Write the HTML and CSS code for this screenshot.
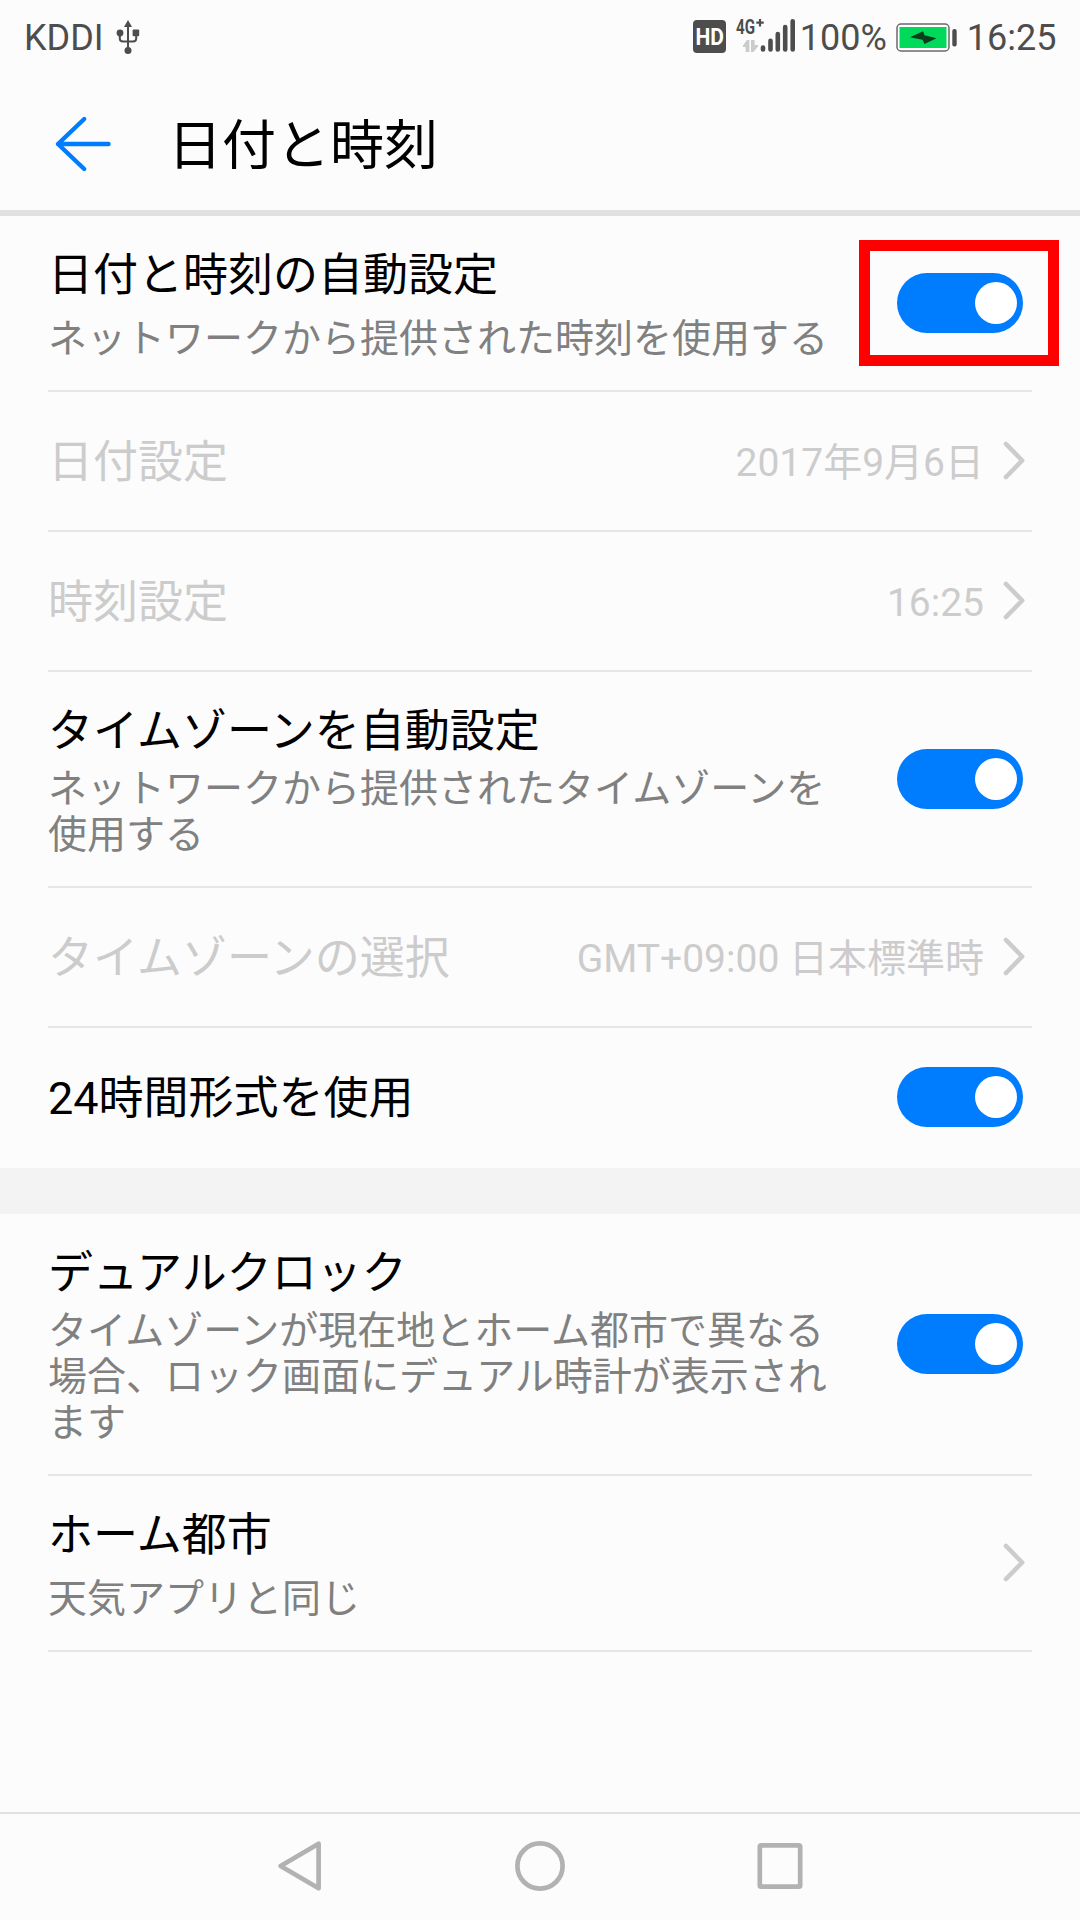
FILE: index.html
```html
<!DOCTYPE html>
<html lang="ja">
<head>
<meta charset="utf-8">
<title>日付と時刻</title>
<link rel="stylesheet" href="styles.css">
</head>
<body>
<div class="screen">
  <header class="status">
    <span class="status-text carrier">KDDI</span>
    <svg class="usb" width="24" height="36" viewBox="0 0 24 36">
      <path d="M12 5V29M3.8 13V19.5Q3.8 22.5 7 22.5H17Q20.2 22.5 20.2 19.5V13" fill="none" stroke="#4d4d4d" stroke-width="2"/>
      <path d="M12 1L16 8H8Z" fill="#4d4d4d"/>
      <circle cx="4" cy="14" r="3.4" fill="#4d4d4d"/>
      <rect x="16.6" y="10.6" width="6.6" height="6.6" rx="1" fill="#4d4d4d"/>
      <circle cx="12" cy="31.5" r="3.5" fill="#4d4d4d"/>
    </svg>
    <svg class="hd" width="33" height="33" viewBox="0 0 33 33">
      <rect width="33" height="33" rx="4" fill="#4d4d4d"/>
      <text x="2.5" y="24.5" textLength="28.5" lengthAdjust="spacingAndGlyphs">HD</text>
    </svg>
    <svg class="signal" width="62" height="40" viewBox="0 0 62 40">
      <text class="net" x="2" y="17.6" textLength="19" lengthAdjust="spacingAndGlyphs">4G</text>
      <path d="M26 3V10.4M22.3 6.7H29.7" stroke="#4d4d4d" stroke-width="2.2"/>
      <path d="M9 31V29.5L13 24H15.4V36H11.6V31ZM17 24H20.6V29H24V30.5L19.5 36H17Z" fill="#cbcbcb"/>
      <path d="M29 31.5V33.5M36.5 24.7V33.5M43.8 18V33.5M51.2 11V33.5M58.7 5.2V33.5" stroke="#4d4d4d" stroke-width="4.6" stroke-linecap="round"/>
    </svg>
    <span class="status-text percent">100%</span>
    <svg class="battery" width="62" height="32" viewBox="0 0 62 32">
      <rect x="1" y="2" width="52" height="27" rx="4" fill="#fff" stroke="#6a6a6a" stroke-width="1.5"/>
      <rect x="3.5" y="5" width="47" height="21" fill="#00d95a"/>
      <path d="M14 15.3L27 9.3L28.5 13.3L40.5 16.2L28.5 22L26.5 17.7Z" fill="#0b3d1e"/>
      <rect x="56.3" y="7" width="4.4" height="17.5" rx="2" fill="#4d4d4d"/>
    </svg>
    <span class="status-text clock">16:25</span>
  </header>

  <div class="titlebar">
    <svg width="60" height="60" viewBox="0 0 60 60">
      <path d="M55.5 30H5L31.2 5M5 30L31.2 55" fill="none" stroke="#007dff" stroke-width="4.4" stroke-linecap="round" stroke-linejoin="round"/>
    </svg>
    <h1 class="title">日付と時刻</h1>
  </div>

  <main class="list">
    <section class="row double">
      <div class="texts"><div class="name">日付と時刻の自動設定</div><div class="desc">ネットワークから提供された時刻を使用する</div></div>
      <div class="toggle highlighted"><span class="knob"></span></div>
    </section>
    <section class="row single disabled">
      <div class="name">日付設定</div><div class="value">2017年9月6日</div>
      <svg class="chevron" width="24" height="42" viewBox="0 0 24 42"><path d="M5 4L21.2 20.5L5 37"/></svg>
    </section>
    <section class="row single disabled">
      <div class="name">時刻設定</div><div class="value">16:25</div>
      <svg class="chevron" width="24" height="42" viewBox="0 0 24 42"><path d="M5 4L21.2 20.5L5 37"/></svg>
    </section>
    <section class="row multi">
      <div class="texts"><div class="name">タイムゾーンを自動設定</div><div class="desc">ネットワークから提供されたタイムゾーンを使用する</div></div>
      <div class="toggle"><span class="knob"></span></div>
    </section>
    <section class="row single disabled">
      <div class="name">タイムゾーンの選択</div><div class="value">GMT+09:00 日本標準時</div>
      <svg class="chevron" width="24" height="42" viewBox="0 0 24 42"><path d="M5 4L21.2 20.5L5 37"/></svg>
    </section>
    <section class="row single last">
      <div class="name">24時間形式を使用</div>
      <div class="toggle"><span class="knob"></span></div>
    </section>
    <div class="band"></div>
    <section class="row multi">
      <div class="texts"><div class="name">デュアルクロック</div><div class="desc">タイムゾーンが現在地とホーム都市で異なる場合、ロック画面にデュアル時計が表示されます</div></div>
      <div class="toggle"><span class="knob"></span></div>
    </section>
    <section class="row double">
      <div class="texts"><div class="name">ホーム都市</div><div class="desc">天気アプリと同じ</div></div>
      <svg class="chevron" width="24" height="42" viewBox="0 0 24 42"><path d="M5 4L21.2 20.5L5 37"/></svg>
    </section>
  </main>

  <nav class="navbar">
    <svg width="54" height="54" viewBox="0 0 54 54"><path d="M7.6 27L45.6 4.7V49.3Z"/></svg>
    <svg width="54" height="54" viewBox="0 0 54 54"><circle cx="27" cy="27" r="22.6"/></svg>
    <svg width="54" height="54" viewBox="0 0 54 54"><rect x="6.8" y="6.3" width="40.4" height="41.4" rx="1.5"/></svg>
  </nav>
</div>
</body>
</html>
```
FILE: styles.css
```css
* { box-sizing: border-box; }

body {
  margin: 0;
  background: #fcfcfc;
  color: #000;
  font-family: Roboto, "Noto Sans CJK JP", sans-serif;
}

.screen {
  width: 1080px;
  height: 1920px;
  display: flex;
  flex-direction: column;
  overflow: hidden;
}

.status {
  height: 78px;
  flex: none;
  display: flex;
  align-items: flex-start;
  padding: 16px 23.5px 0 24px;
}

.status-text {
  font-size: 36px;
  line-height: 44px;
  color: #4d4d4d;
}

.usb { margin: 3px 0 0 12px; }

.hd { margin: 4px 0 0 auto; }
.hd text { font: 700 23px Roboto, sans-serif; fill: #fff; }
.signal { margin-left: 8px; }
.net { font: 700 21px Roboto, sans-serif; fill: #4d4d4d; }
.percent { margin-left: 4px; }
.battery { margin: 6px 0 0 9px; }
.clock { margin-left: 9px; }

.titlebar {
  height: 138px;
  flex: none;
  display: flex;
  align-items: center;
  gap: 55px;
  padding-left: 53px;
  border-bottom: 6px solid #e1e1e1;
}

.title {
  margin: 0;
  padding-top: 5px;
  font-size: 54px;
  font-weight: 400;
  line-height: 72px;
}

.list { flex: 1; }

.row {
  margin: 0 48px;
  display: flex;
  align-items: center;
  justify-content: space-between;
  border-bottom: 2px solid #e6e6e6;
}

.row.single { height: 140px; }
.row.last { border-bottom-color: transparent; }

.texts { width: 800px; padding: 30px 0 28px; }
.name { font-size: 45px; line-height: 60px; }
.single .name { padding-top: 4px; }
.desc { font-size: 39px; line-height: 46px; color: #808080; }
.double .desc { margin-top: 10px; }
.multi .desc { margin-top: 4px; }

.disabled { color: #ccc; }
.value {
  margin: 0 17px 0 auto;
  padding-top: 4px;
  font-size: 39px;
  line-height: 46px;
}

.chevron { margin-right: 7px; flex: none; }
.chevron path {
  fill: none;
  stroke: #ccc;
  stroke-width: 4.6;
  stroke-linecap: round;
  stroke-linejoin: round;
}

.toggle {
  position: relative;
  flex: none;
  width: 126px;
  height: 60px;
  margin-right: 9px;
  padding: 9px 6px;
  display: flex;
  justify-content: flex-end;
  border-radius: 30px;
  background: #007dff;
}

.knob {
  width: 42px;
  height: 42px;
  border-radius: 50%;
  background: #fff;
}

/* Callout frame drawn over the row around the switch */
.highlighted::after {
  content: "";
  position: absolute;
  left: -38px;
  top: -33px;
  box-sizing: border-box;
  width: 200px;
  height: 126px;
  border: 11px solid #f00;
}

.band { height: 46px; background: #f3f3f3; }

.navbar {
  height: 108px;
  flex: none;
  display: flex;
  align-items: center;
  justify-content: center;
  gap: 186px;
  padding-bottom: 2px;
  border-top: 2px solid #e1e1e1;
}

.navbar svg {
  fill: none;
  stroke: #b2b2b2;
  stroke-width: 4.7;
  stroke-linejoin: round;
}
```
